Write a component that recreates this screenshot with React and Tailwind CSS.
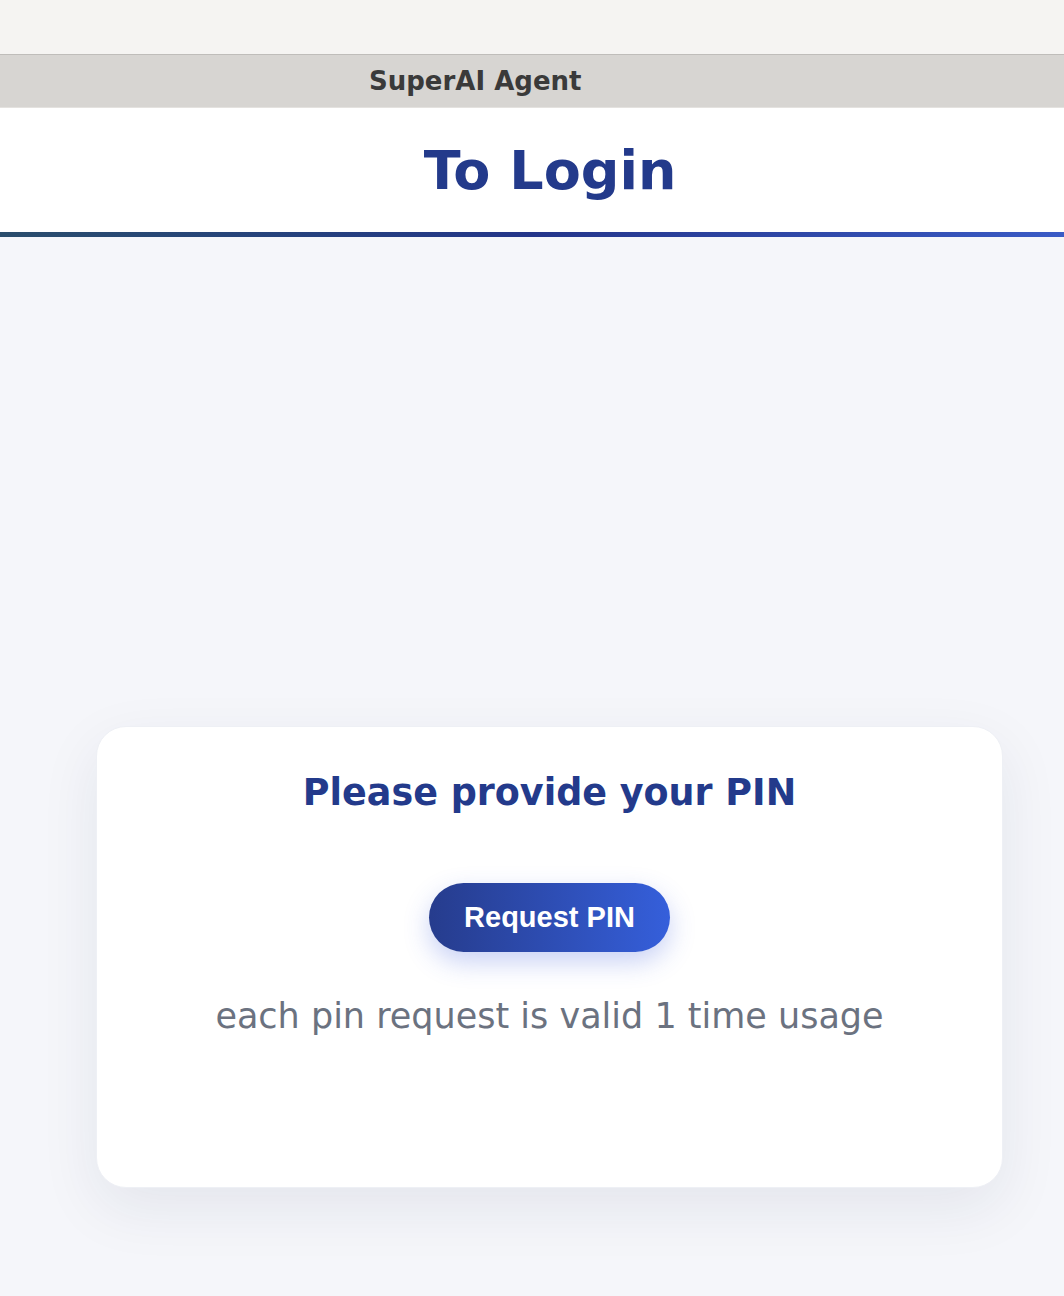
import React from "react";

const App = () => {
  return (
    <div className="min-h-screen bg-[#f5f6fa] font-['DejaVu_Sans',sans-serif]">
      {/* window chrome */}
      <div className="h-[55px] bg-[#f5f4f2] border-b border-[#bfbdba]"></div>
      <div className="h-[53px] bg-[#d7d5d2] border-b border-[#e4e2df] flex items-center pl-[369px]">
        <span className="text-[26px] font-bold text-[#3a3a3a] leading-none">SuperAI Agent</span>
      </div>

      {/* header */}
      <header className="h-[124px] bg-white flex items-center justify-center pl-[36px]">
        <h1 className="text-[54px] font-bold text-[#233a8b] leading-none pt-[2px]">To Login</h1>
      </header>
      <div className="h-[5px] bg-gradient-to-r from-[#2a4d6c] via-[#24358a] to-[#3a5bc6]"></div>

      {/* main */}
      <main className="pl-[96px] pt-[489px] pb-[108px]">
        <div className="w-[907px] h-[462px] bg-white rounded-[30px] border border-[#eef0f5] shadow-[0_20px_60px_rgba(30,41,80,0.08)] flex flex-col items-center pt-[48px]">
          <h2 className="text-[36.5px] font-bold text-[#233a8b] leading-none">Please provide your PIN</h2>
          <button
            type="button"
            className="mt-[71px] h-[69px] px-[35px] rounded-full bg-gradient-to-r from-[#263c8d] to-[#355fdb] text-white text-[29px] font-bold font-['Liberation_Sans',Arial,sans-serif] leading-none shadow-[0_10px_26px_rgba(59,91,219,0.28)]"
          >
            Request PIN
          </button>
          <p className="mt-[47px] text-[35px] text-[#6b7280] leading-none">each pin request is valid 1 time usage</p>
        </div>
      </main>
    </div>
  );
};

export default App;
